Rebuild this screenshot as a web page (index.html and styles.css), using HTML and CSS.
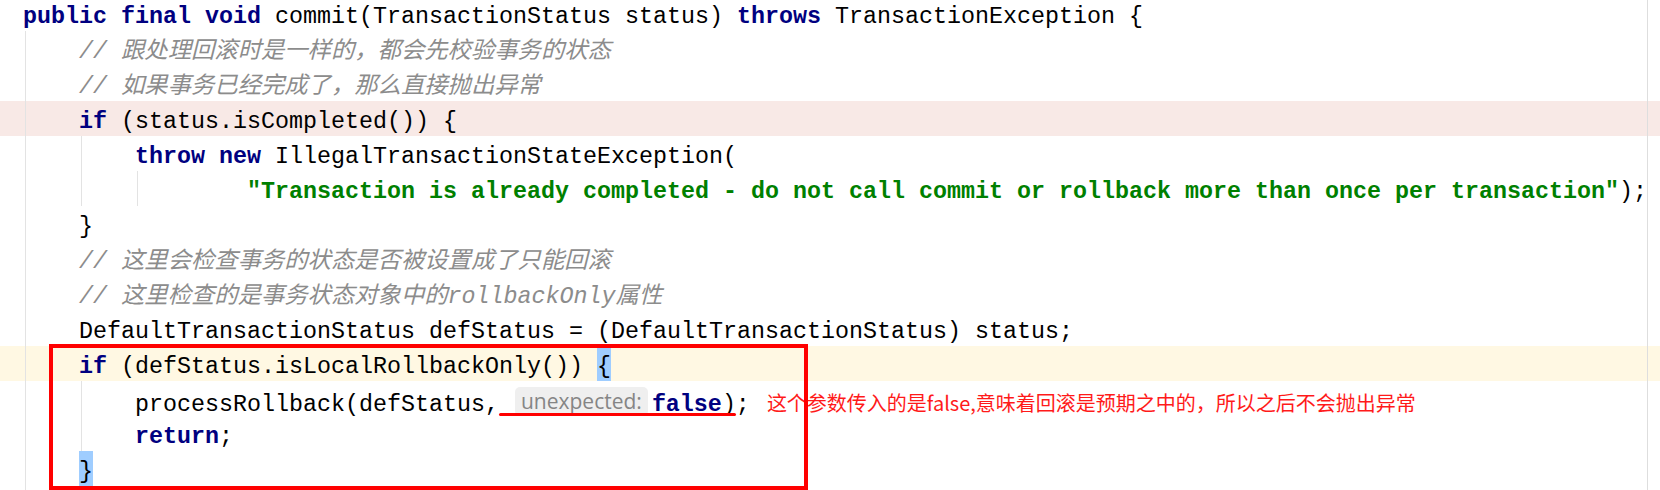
FILE: index.html
```html
<!DOCTYPE html>
<html lang="zh-CN">
<head>
<meta charset="utf-8">
<title>commit</title>
<link rel="stylesheet" href="styles.css">
</head>
<body>
<div class="editor">
  <div class="guide g0"></div>
  <div class="guide g1"></div>
  <div class="guide g2"></div>
  <div class="guide g3"></div>
  <div class="margin-guide"></div>

  <div class="line"><span class="kw">public final void</span> commit(TransactionStatus status) <span class="kw">throws</span> TransactionException {</div>
  <div class="line">    <span class="cm">// 跟处理回滚时是一样的，都会先校验事务的状态</span></div>
  <div class="line">    <span class="cm">// 如果事务已经完成了，那么直接抛出异常</span></div>
  <div class="line hl-error">    <span class="kw">if</span> (status.isCompleted()) {</div>
  <div class="line">        <span class="kw">throw new</span> IllegalTransactionStateException(</div>
  <div class="line">                <span class="str">"Transaction is already completed - do not call commit or rollback more than once per transaction"</span>);</div>
  <div class="line">    }</div>
  <div class="line">    <span class="cm">// 这里会检查事务的状态是否被设置成了只能回滚</span></div>
  <div class="line">    <span class="cm">// 这里检查的是事务状态对象中的rollbackOnly属性</span></div>
  <div class="line">    DefaultTransactionStatus defStatus = (DefaultTransactionStatus) status;</div>
  <div class="line hl-caret">    <span class="kw">if</span> (defStatus.isLocalRollbackOnly()) <span class="brace">{</span></div>
  <div class="line">        processRollback(defStatus, <span class="hint">unexpected:</span><span class="kw">false</span>);<span class="note">这个参数传入的是false,意味着回滚是预期之中的，所以之后不会抛出异常</span></div>
  <div class="line">        <span class="kw">return</span>;</div>
  <div class="line">    <span class="brace">}</span></div>

  <div class="red-box"></div>
  <div class="red-underline"></div>
</div>
</body>
</html>
```

FILE: styles.css
```css
html, body {
  margin: 0;
  padding: 0;
  background: #ffffff;
  overflow: hidden;
}

body {
  width: 1660px;
  height: 490px;
}

.editor {
  position: relative;
  margin-top: -4px;
  font-family: "Liberation Mono", "Noto Sans CJK SC", monospace;
  font-size: 23.333px;
  color: #000000;
}

.line {
  height: 31px;
  padding-top: 4px;
  line-height: 35px;
  padding-left: 23px;
  white-space: pre;
}

.kw {
  color: #000080;
  font-weight: bold;
}

.str {
  color: #008000;
  font-weight: bold;
}

.cm {
  color: #8c8c8c;
  font-style: italic;
}

.hl-error {
  background: #f8e9e6;
}

.hl-caret {
  background: #fff8e3;
}

.brace {
  display: inline-block;
  vertical-align: top;
  margin-top: -4px;
  height: 35px;
  line-height: 43px;
  background: #9fcdff;
}

.hint {
  display: inline-block;
  height: 29px;
  line-height: 29px;
  margin: 0 4px 0 2px;
  padding: 0 6px;
  vertical-align: 2px;
  border-radius: 5px;
  background: #efefef;
  color: #858585;
  font-family: "Open Sans", "Liberation Sans", sans-serif;
  font-size: 21px;
}

.note {
  margin-left: 17px;
  color: #ff1a1a;
  font-family: "Noto Sans CJK SC", sans-serif;
  font-size: 20px;
}

.guide {
  position: absolute;
  width: 1px;
  background: #e3e3e3;
}

.g0 { left: 25px; top: 35px; height: 470px; }
.g1 { left: 81px; top: 140px; height: 70px; }
.g2 { left: 137px; top: 175px; height: 35px; }
.g3 { left: 81px; top: 385px; height: 70px; }

.margin-guide {
  position: absolute;
  left: 1647px;
  top: 0;
  width: 1px;
  height: 500px;
  background: #dedede;
}

.red-box {
  position: absolute;
  left: 49px;
  top: 348px;
  width: 759px;
  height: 146px;
  box-sizing: border-box;
  border: 4px solid #ff0000;
}

.red-underline {
  position: absolute;
  left: 499px;
  top: 417px;
  width: 237px;
  height: 3px;
  border-radius: 2px;
  background: #ff0000;
}
```
